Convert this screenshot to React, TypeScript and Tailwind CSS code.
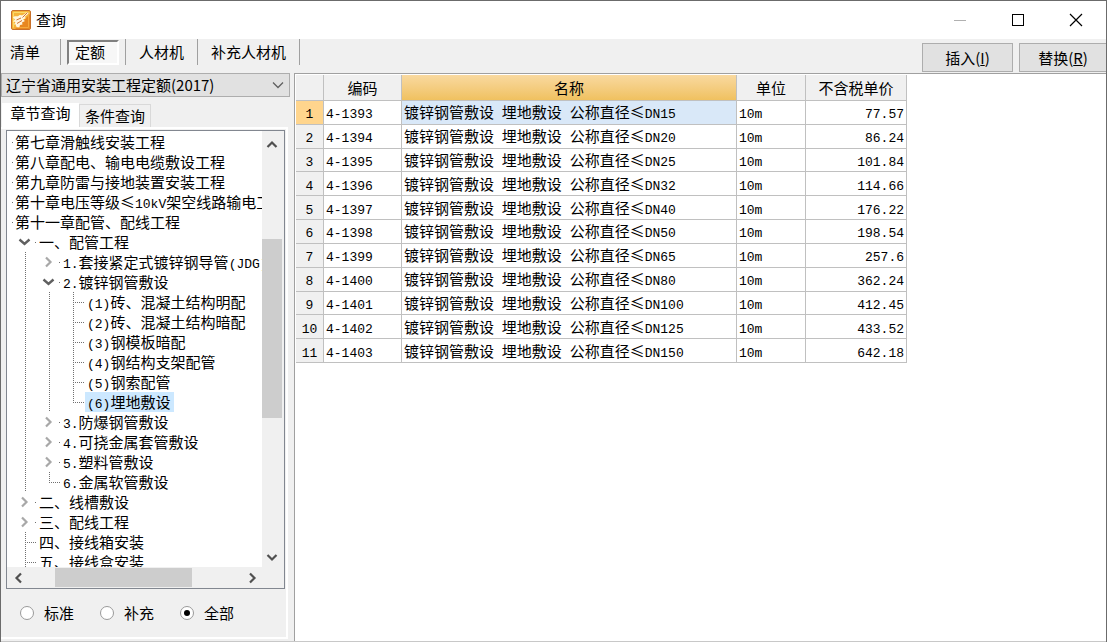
import { type FC, useState } from "react";
import clsx from "clsx";

// ---------------------------------------------------------------------------
// Data
// ---------------------------------------------------------------------------

type Guide = "line" | "tee" | "end" | "open" | "closed";

interface TreeNode {
  label: string;
  guides: Guide[];
}

const TREE: TreeNode[] = [
  { label: "第七章滑触线安装工程", guides: [] },
  { label: "第八章配电、输电电缆敷设工程", guides: [] },
  { label: "第九章防雷与接地装置安装工程", guides: [] },
  { label: "第十章电压等级≤10kV架空线路输电工程", guides: [] },
  { label: "第十一章配管、配线工程", guides: [] },
  { label: "一、配管工程", guides: ["open"] },
  { label: "1.套接紧定式镀锌钢导管(JDG)", guides: ["line", "closed"] },
  { label: "2.镀锌钢管敷设", guides: ["line", "open"] },
  { label: "(1)砖、混凝土结构明配", guides: ["line", "line", "tee"] },
  { label: "(2)砖、混凝土结构暗配", guides: ["line", "line", "tee"] },
  { label: "(3)钢模板暗配", guides: ["line", "line", "tee"] },
  { label: "(4)钢结构支架配管", guides: ["line", "line", "tee"] },
  { label: "(5)钢索配管", guides: ["line", "line", "tee"] },
  { label: "(6)埋地敷设", guides: ["line", "line", "end"] },
  { label: "3.防爆钢管敷设", guides: ["line", "closed"] },
  { label: "4.可挠金属套管敷设", guides: ["line", "closed"] },
  { label: "5.塑料管敷设", guides: ["line", "closed"] },
  { label: "6.金属软管敷设", guides: ["line", "end"] },
  { label: "二、线槽敷设", guides: ["closed"] },
  { label: "三、配线工程", guides: ["closed"] },
  { label: "四、接线箱安装", guides: ["tee"] },
  { label: "五、接线盒安装", guides: ["tee"] },
];

const ROWS = [
  { code: "4-1393", dn: 15, price: "77.57" },
  { code: "4-1394", dn: 20, price: "86.24" },
  { code: "4-1395", dn: 25, price: "101.84" },
  { code: "4-1396", dn: 32, price: "114.66" },
  { code: "4-1397", dn: 40, price: "176.22" },
  { code: "4-1398", dn: 50, price: "198.54" },
  { code: "4-1399", dn: 65, price: "257.6" },
  { code: "4-1400", dn: 80, price: "362.24" },
  { code: "4-1401", dn: 100, price: "412.45" },
  { code: "4-1402", dn: 125, price: "433.52" },
  { code: "4-1403", dn: 150, price: "642.18" },
];

const MODES = ["清单", "定额", "人材机", "补充人材机"];
const SCOPES = ["标准", "补充", "全部"];

// ---------------------------------------------------------------------------
// Small pieces
// ---------------------------------------------------------------------------

// Latin runs are set in a smaller mono face, about half as wide as a Han glyph
const Mixed: FC<{ text: string }> = ({ text }) => (
  <>
    {text.split(/([ -~]+)/).map((part, i) =>
      i % 2 === 1 ? (
        <span key={i} className="font-['Liberation_Mono',monospace] text-[13px] leading-none">
          {part}
        </span>
      ) : (
        part
      ),
    )}
  </>
);

const Arrow: FC<{ dir: "up" | "down" | "left" | "right"; className?: string }> = ({
  dir,
  className,
}) => {
  const d = {
    up: "M1.5 8 L6 3.5 L10.5 8",
    down: "M1.5 4 L6 8.5 L10.5 4",
    left: "M8 1.5 L3.5 6 L8 10.5",
    right: "M4 1.5 L8.5 6 L4 10.5",
  }[dir];
  return (
    <svg viewBox="0 0 12 12" className={clsx("h-3 w-3", className)} fill="none" stroke="currentColor" strokeWidth={2.2}>
      <path d={d} />
    </svg>
  );
};

const GuideCell: FC<{ kind: Guide }> = ({ kind }) => (
  <svg viewBox="0 0 24 20" className="h-5 w-6 shrink-0" fill="none">
    {(kind === "line" || kind === "tee") && (
      <path d="M12.5 0V20" stroke="#707070" strokeDasharray="1 1" />
    )}
    {kind === "end" && <path d="M12.5 0V11" stroke="#707070" strokeDasharray="1 1" />}
    {(kind === "tee" || kind === "end") && (
      <path d="M12 10.5H23" stroke="#707070" strokeDasharray="1 1" />
    )}
    {kind === "open" && <path d="M6.5 7.5L11.5 12L16.5 7.5" stroke="#606060" strokeWidth={2.4} />}
    {kind === "closed" && <path d="M9 5.5L13.5 10L9 14.5" stroke="#a8a8a8" strokeWidth={2.2} />}
    {(kind === "open" || kind === "closed") && <path d="M22 10.5H23" stroke="#707070" />}
  </svg>
);

const AppIcon: FC = () => (
  <svg viewBox="0 0 20 20" className="h-5 w-5">
    <rect x="0.5" y="0.5" width="19" height="19" rx="1.5" fill="#f6b43a" stroke="#c8702a" />
    <path d="M4 19L19 4V18A1 1 0 0 1 18 19Z" fill="#e8871f" />
    <path d="M2.5 17.5V2.5H17.5" fill="none" stroke="#fbd968" />
    <path d="M17.5 3V17.5H3" fill="none" stroke="#f5a93c" />
    <path
      d="M2 7.5C4 5 6 7.500 8 5.500C9.500 4 10.500 6 12 5L16.500 2L17.500 3.500L13.500 7L15 8L12 9.500L14 11L11 12.500L11.500 14.500L9 15L8.500 17C6 18 4.500 16.500 5 14.500L3 14.500L4.500 12L2 11.500L4 9.500Z"
      fill="#fff6df"
    />
    <path d="M5.500 10L10 8M6 13.500L11 10.500M16.500 2.500L11.500 7.500" stroke="#c9601f" strokeWidth="0.900" />
  </svg>
);

// ---------------------------------------------------------------------------
// Title bar and toolbar
// ---------------------------------------------------------------------------

const TitleBar: FC = () => (
  <header className="flex h-[38px] shrink-0 items-center bg-white pr-px pl-2.5">
    <AppIcon />
    <h1 className="flex-1 pl-[5px] text-[15px]">查询</h1>
    <button type="button" aria-label="最小化" className="flex h-full w-[58px] items-center justify-center">
      <svg viewBox="0 0 14 14" className="h-3.5 w-3.5" stroke="#b0b0b0">
        <path d="M1 7.500H13" />
      </svg>
    </button>
    <button type="button" aria-label="最大化" className="flex h-full w-[58px] items-center justify-center">
      <svg viewBox="0 0 14 14" className="h-3.5 w-3.5" fill="none" stroke="#000">
        <rect x="1.5" y="1.5" width="11" height="11" />
      </svg>
    </button>
    <button type="button" aria-label="关闭" className="flex h-full w-[58px] items-center justify-center">
      <svg viewBox="0 0 14 14" className="h-3.5 w-3.5" stroke="#000" strokeWidth={1.2}>
        <path d="M1 1L13 13M13 1L1 13" />
      </svg>
    </button>
  </header>
);

const Toolbar: FC<{ mode: string; onMode: (m: string) => void }> = ({ mode, onMode }) => (
  <div className="flex h-[34px] shrink-0 items-start">
    <nav className="flex flex-1 pl-[5px]">
      {MODES.map((m) => (
        <div key={m} className="flex h-[26px] items-center border-r border-[#a0a0a0] px-1.5">
          <button
            type="button"
            onClick={() => onMode(m)}
            className={clsx(
              "h-[25px] border-2 leading-5",
              m === "清单" ? "-ml-1 pr-3" : m === mode ? "pr-3 pl-1.5" : "px-[5px]",
              m === mode
                ? "border-t-[#808080] border-r-white border-b-white border-l-[#808080] bg-[#f7f7f7]"
                : "border-transparent",
            )}
          >
            {m}
          </button>
        </div>
      ))}
    </nav>
    <div className="flex gap-1.5 pt-1">
      <button type="button" className="h-[29px] w-[91px] border border-[#adadad] bg-[#e1e1e1]">
        插入(<u>I</u>)
      </button>
      <button type="button" className="h-[29px] w-[87px] border border-r-0 border-[#adadad] bg-[#e1e1e1]">
        替换(<u>R</u>)
      </button>
    </div>
  </div>
);

// ---------------------------------------------------------------------------
// Sidebar: quota library, chapter tree, scope
// ---------------------------------------------------------------------------

const ChapterTree: FC = () => {
  const [selected, setSelected] = useState("(6)埋地敷设");

  return (
    <div className="mr-px ml-[5px] flex min-h-0 flex-1 flex-col border border-[#828790] bg-white">
      <div className="flex min-h-0 flex-1">
        <ul className="min-w-0 flex-1 overflow-hidden pt-px">
          {TREE.map(({ label, guides }) => (
            <li key={label} className="flex h-5 items-center">
              <span className="flex w-1.5 shrink-0 justify-end">
                {guides.length === 0 && <i className="h-px w-px bg-[#707070]" />}
              </span>
              {guides.map((g, i) => (
                <GuideCell key={i} kind={g} />
              ))}
              <button
                type="button"
                onClick={() => setSelected(label)}
                className={clsx(
                  "h-5 pr-1 pl-0.5 leading-5 whitespace-nowrap",
                  label === selected && "bg-[#cce8ff]",
                )}
              >
                <Mixed text={label} />
              </button>
            </li>
          ))}
        </ul>
        <div className="flex w-[22px] flex-col items-center bg-[#f0f0f0] pt-2 pr-0.5 pb-1 text-[#505050]">
          <Arrow dir="up" />
          <div className="mt-[88px] h-[179px] w-full bg-[#cdcdcd]" />
          <Arrow dir="down" className="mt-auto" />
        </div>
      </div>
      <div className="flex h-[21px] shrink-0 items-center bg-[#f0f0f0] pr-[26px] pl-1.5 text-[#505050]">
        <Arrow dir="left" />
        <div className="ml-[30px] h-[19px] w-[137px] bg-[#cdcdcd]" />
        <Arrow dir="right" className="ml-auto" />
      </div>
    </div>
  );
};

const Sidebar: FC = () => {
  const [scope, setScope] = useState("全部");

  return (
    <aside className="flex w-[289px] shrink-0 flex-col pb-0.5">
      <div className="relative">
        <select
          aria-label="定额库"
          className="block h-6 w-full appearance-none border border-[#adadad] bg-[#e1e1e1] pl-1 leading-5"
        >
          <option>辽宁省通用安装工程定额(2017)</option>
        </select>
        <svg
          viewBox="0 0 12 12"
          className="pointer-events-none absolute top-1.5 right-1.5 h-3 w-3"
          fill="none"
          stroke="#606060"
          strokeWidth={1.3}
        >
          <path d="M1 3.500L6 8.500L11 3.500" />
        </svg>
      </div>
      <div className="mt-1.5 flex items-end pl-px">
        <button type="button" className="h-6 w-[77px] bg-white pb-1 leading-5">
          章节查询
        </button>
        <button type="button" className="h-[23px] w-[72px] border border-b-0 border-[#d9d9d9] leading-5">
          条件查询
        </button>
      </div>
      <div className="mr-0.5 flex min-h-0 flex-1 flex-col border-r-2 border-b-2 border-white">
        <div className="mb-px h-0.5 bg-white" />
        <ChapterTree />
        <div className="flex h-12 shrink-0 items-center pl-[19px]">
          {SCOPES.map((s) => (
            <label key={s} className="flex w-20 items-center gap-2.5">
              <input
                type="radio"
                name="scope"
                checked={scope === s}
                onChange={() => setScope(s)}
                className="grid h-3.5 w-3.5 appearance-none place-items-center rounded-full border border-[#9a9a9a] bg-white before:h-1.5 before:w-1.5 before:rounded-full checked:before:bg-black"
              />
              {s}
            </label>
          ))}
        </div>
      </div>
    </aside>
  );
};

// ---------------------------------------------------------------------------
// Result grid
// ---------------------------------------------------------------------------

const ResultGrid: FC = () => {
  const [active, setActive] = useState(0);
  const head = "border-r border-b border-[#c0c0c0] bg-[#f0f0f0] font-normal";
  const cell = "border-r border-b border-[#c0c0c0]";

  return (
    <main className="ml-1 min-w-0 flex-1 overflow-auto border-t border-l border-[#a0a0a0] bg-white pt-px pl-px">
      <table className="h-[288px] w-[611px] table-fixed border-separate border-spacing-0 leading-[18px]">
        <colgroup>
          <col className="w-7" />
          <col className="w-[78px]" />
          <col className="w-[335px]" />
          <col className="w-[69px]" />
          <col className="w-[101px]" />
        </colgroup>
        <thead>
          <tr className="h-[26px]">
            <th className={head} />
            <th className={head}>编码</th>
            <th className="border-r border-b border-[#c0c0c0] bg-linear-to-b from-[#f9d99f] to-[#f0c15f] font-normal">
              名称
            </th>
            <th className={head}>单位</th>
            <th className={head}>不含税单价</th>
          </tr>
        </thead>
        <tbody>
          {ROWS.map((row, i) => (
            <tr key={row.code} onClick={() => setActive(i)}>
              <th className={clsx(cell, "font-normal", i === active ? "bg-[#ffd58d]" : "bg-[#f0f0f0]")}>
                <Mixed text={String(i + 1)} />
              </th>
              <td className={clsx(cell, "pl-0.5")}>
                <Mixed text={row.code} />
              </td>
              <td className={clsx(cell, "pl-0.5 whitespace-nowrap", i === active && "bg-[#d9e8f8]")}>
                <Mixed text={`镀锌钢管敷设 埋地敷设 公称直径≤DN${row.dn}`} />
              </td>
              <td className={clsx(cell, "pl-0.5")}>
                <Mixed text="10m" />
              </td>
              <td className={clsx(cell, "pr-0.5 text-right")}>
                <Mixed text={row.price} />
              </td>
            </tr>
          ))}
        </tbody>
      </table>
    </main>
  );
};

const App: FC = () => {
  const [mode, setMode] = useState("定额");

  return (
    <div className="flex h-screen flex-col border-x border-t border-[#6b6b6b] bg-[#f0f0f0] font-['Noto_Sans_CJK_SC',sans-serif] text-[15px] leading-5 text-black">
      <TitleBar />
      <Toolbar mode={mode} onMode={setMode} />
      <div className="flex min-h-0 flex-1 border-b border-[#c8c8c8]">
        <Sidebar />
        <ResultGrid />
      </div>
    </div>
  );
};

export default App;
